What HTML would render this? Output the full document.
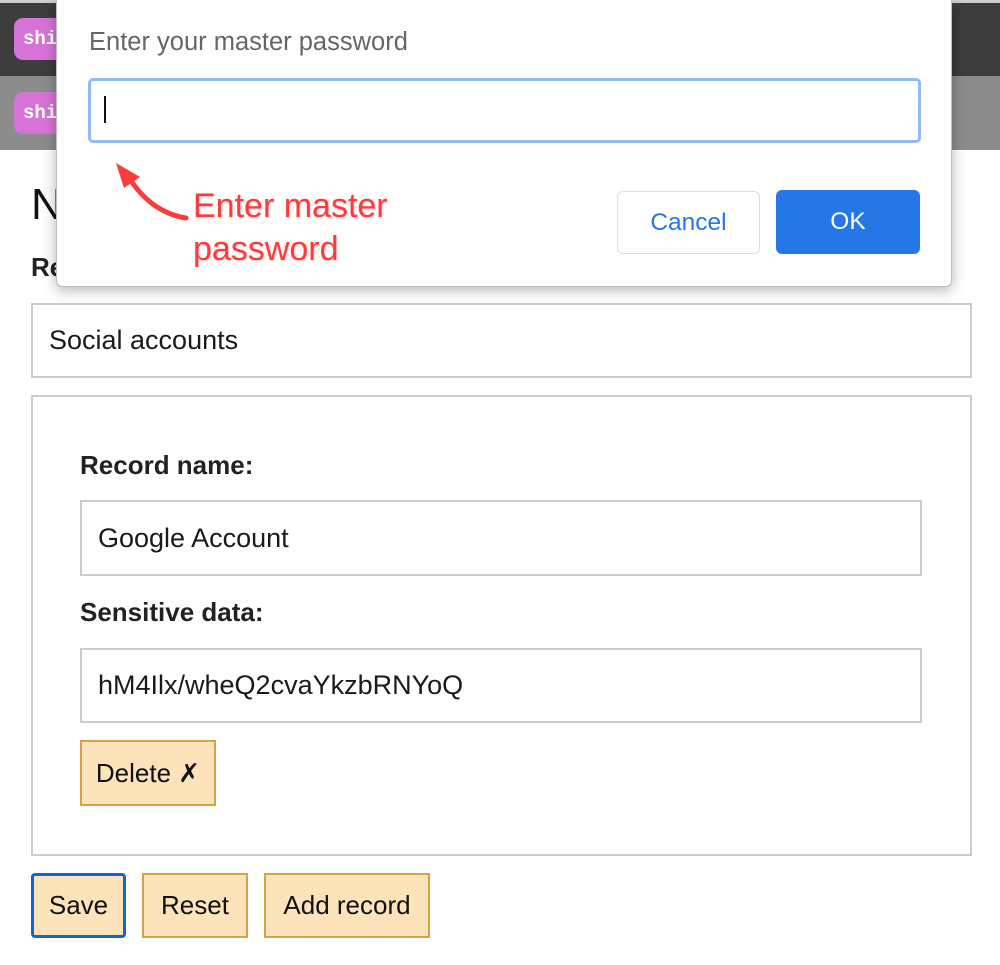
<!DOCTYPE html>
<html><head><meta charset="utf-8"><style>
body{margin:0;width:1000px;height:965px;position:relative;background:#fff;font-family:"Liberation Sans",Arial,sans-serif;overflow:hidden;color:#1a1a1a}
.a{position:absolute;box-sizing:border-box}
.inp{border:2px solid #ccc;background:#fff;font-size:27px;padding-left:16px;display:flex;align-items:center}
.lbl{font-weight:bold;font-size:26px;color:#222}
.btn{background:#fde3b9;border:2px solid #d9a04a;font-size:26px;display:flex;align-items:center;justify-content:center;color:#111}
</style></head><body>
<div class="a" style="left:0;top:0;width:1000px;height:3px;background:#cfcfcf"></div>
<div class="a" style="left:0;top:3px;width:1000px;height:73px;background:#3d3d3d"></div>
<div class="a" style="left:0;top:76px;width:1000px;height:74px;background:#8c8c8c"></div>
<div class="a" style="left:14px;top:18px;width:60px;height:42px;background:#d773d8;border-radius:9px;color:#fff;font-family:'Liberation Mono',monospace;font-weight:bold;font-size:19px;padding:10px 0 0 9px">shi</div>
<div class="a" style="left:14px;top:92px;width:60px;height:42px;background:#d773d8;border-radius:9px;color:#fff;font-family:'Liberation Mono',monospace;font-weight:bold;font-size:19px;padding:10px 0 0 9px">shi</div>

<div class="a" style="left:31px;top:180px;font-size:44px;color:#111">N</div>
<div class="a lbl" style="left:31px;top:252px">Re</div>
<div class="a inp" style="left:31px;top:303px;width:941px;height:75px">Social accounts</div>
<div class="a" style="left:31px;top:395px;width:941px;height:461px;border:2px solid #ccc"></div>
<div class="a lbl" style="left:80px;top:450px">Record name:</div>
<div class="a inp" style="left:80px;top:500px;width:842px;height:76px">Google Account</div>
<div class="a lbl" style="left:80px;top:597px">Sensitive data:</div>
<div class="a inp" style="left:80px;top:648px;width:842px;height:75px">hM4Ilx/wheQ2cvaYkzbRNYoQ</div>
<div class="a btn" style="left:80px;top:740px;width:136px;height:66px">Delete ✗</div>
<div class="a btn" style="left:31px;top:873px;width:95px;height:65px;border:3px solid #1565d0;border-radius:4px">Save</div>
<div class="a btn" style="left:142px;top:873px;width:106px;height:65px">Reset</div>
<div class="a btn" style="left:264px;top:873px;width:166px;height:65px">Add record</div>

<div class="a" style="left:56px;top:0;width:896px;height:287px;background:#fff;border-radius:0 0 6px 6px;box-shadow:0 3px 14px rgba(0,0,0,.3);border:1px solid #bbb;border-top:none"></div>
<div class="a" style="left:89px;top:28px;font-size:25.5px;color:#666">Enter your master password</div>
<div class="a" style="left:88px;top:78px;width:833px;height:65px;border:3px solid #93baf2;border-radius:5px;background:#fff"></div>
<div class="a" style="left:104px;top:96px;width:2px;height:27px;background:#111"></div>
<div class="a" style="left:617px;top:191px;width:143px;height:63px;border:1px solid #ddd;border-radius:6px;color:#2477e4;font-size:24.5px;display:flex;align-items:center;justify-content:center">Cancel</div>
<div class="a" style="left:776px;top:190px;width:144px;height:64px;background:#2477e4;border-radius:6px;color:#fff;font-size:24.5px;display:flex;align-items:center;justify-content:center">OK</div>
<div class="a" style="left:193px;top:185px;font-size:34px;line-height:43px;color:#fc3b3b;text-shadow:1px 1px 2px rgba(0,0,0,.2)">Enter master<br>password</div>
<svg class="a" style="left:100px;top:150px" width="100" height="80"><path d="M86 68 Q50 62 28 26" stroke="#fc3b3b" stroke-width="5" fill="none" stroke-linecap="round"/><path d="M16 13 L40 27 L24 38 Z" fill="#fc3b3b"/></svg>
</body></html>
